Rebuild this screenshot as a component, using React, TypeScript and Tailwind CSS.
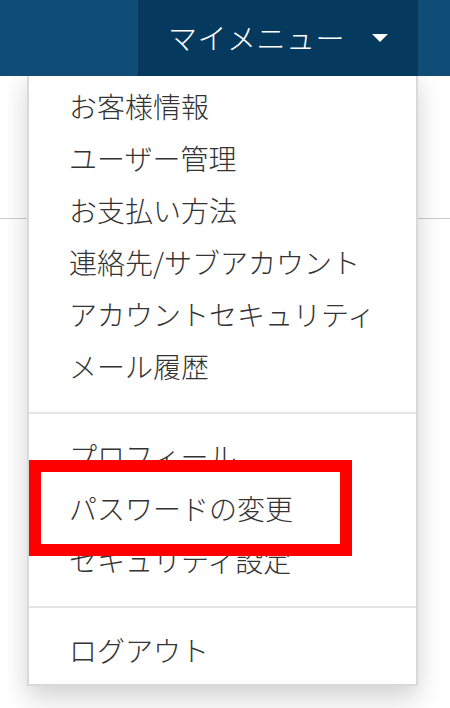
import React from "react";

const group1 = ["お客様情報", "ユーザー管理", "お支払い方法", "連絡先/サブアカウント", "アカウントセキュリティ", "メール履歴"];
const group2 = ["プロフィール", "パスワードの変更", "セキュリティ設定"];
const group3 = ["ログアウト"];

function Item({ label }: { label: string }) {
  return (
    <li className="h-[52px] leading-[48px] pl-[40px] text-[28px] font-light text-[#333333] whitespace-nowrap">
      {label}
    </li>
  );
}

function Divider() {
  return <li className="my-[18px] h-[2px] bg-[#e5e5e5]" />;
}

export default function App() {
  return (
    <div
      className="relative w-[450px] h-[708px] bg-white overflow-hidden"
      style={{ fontFamily: '"Noto Sans CJK JP", "Noto Sans", sans-serif' }}
    >
      <header className="relative z-20 h-[76px] bg-[#0f4d77] flex justify-end pr-[32px]">
        <div className="relative w-[280px] h-full bg-[#053a5e] flex items-center pl-[30px] pr-[30px]">
          <span className="text-white text-[29px] font-light tracking-[0.5px] -mt-[1px]">マイメニュー</span>
          <svg className="ml-auto" width="16" height="8" viewBox="0 0 16 8">
            <path d="M0 0 L16 0 L8 8 Z" fill="#ffffff" />
          </svg>
        </div>
      </header>

      <div className="h-[143px] border-b border-[#cccccc]" />

      <div className="absolute z-10 left-[27px] top-[70px] w-[391px] bg-white border-2 border-[#d9d9d9] shadow-[0_12px_24px_rgba(0,0,0,0.175)] pt-[10px] pb-[6px]">
        <ul>
          {group1.map((l) => (
            <Item key={l} label={l} />
          ))}
          <Divider />
          {group2.map((l) => (
            <Item key={l} label={l} />
          ))}
          <Divider />
          {group3.map((l) => (
            <Item key={l} label={l} />
          ))}
        </ul>
      </div>

      <div className="absolute z-30 left-[29px] top-[460px] w-[323px] h-[96px] border-[12px] border-[#ff0000]" />
    </div>
  );
}
